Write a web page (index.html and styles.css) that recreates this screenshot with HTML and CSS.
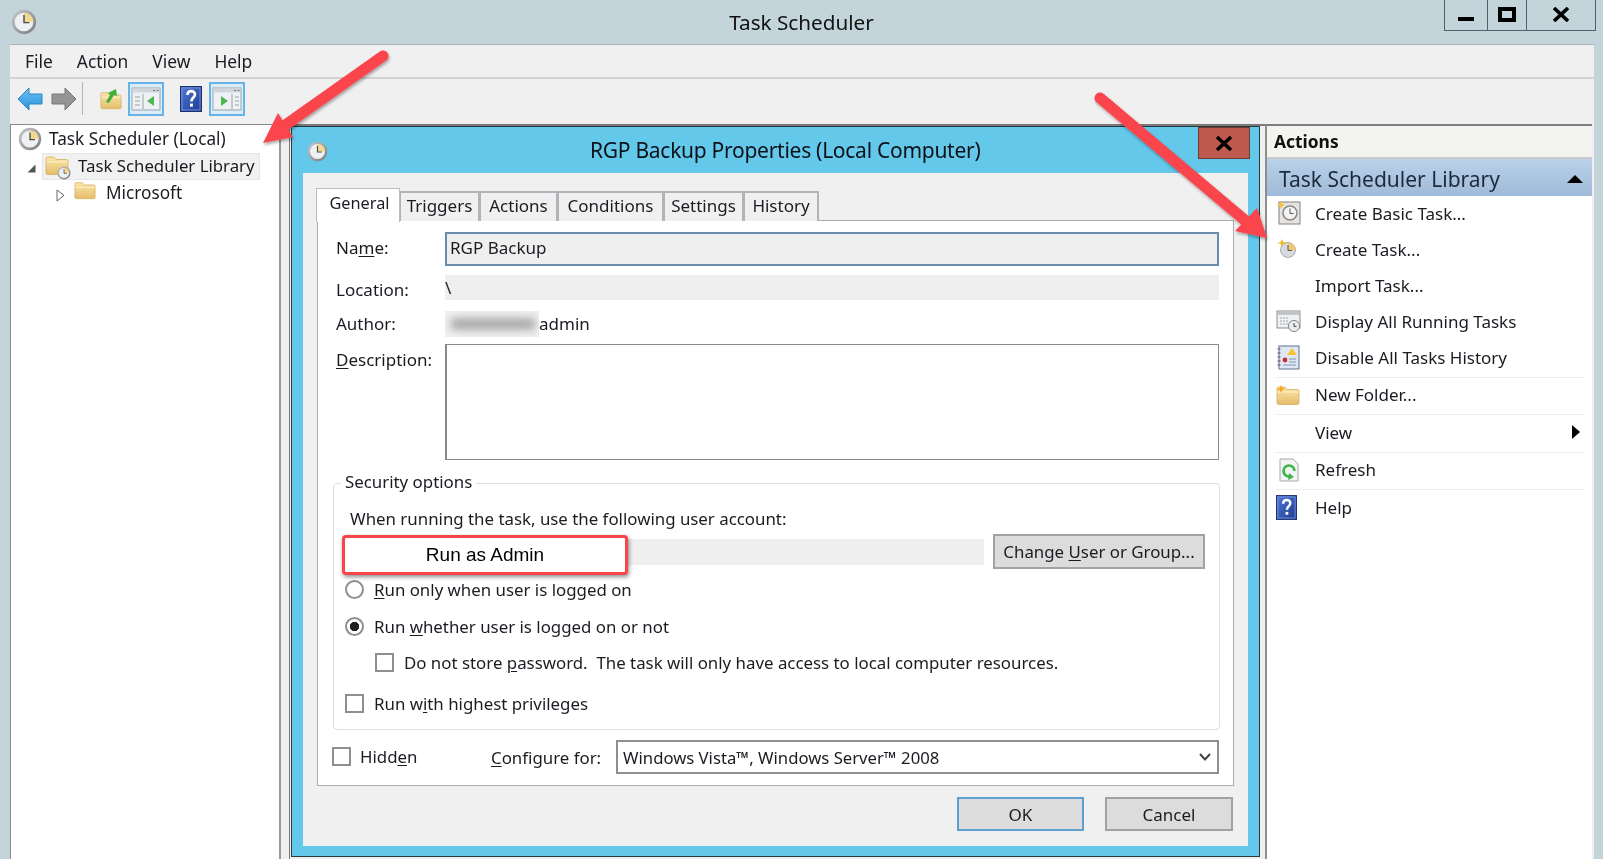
FILE: index.html
```html
<!DOCTYPE html>
<html lang="en">
<head>
<meta charset="utf-8">
<title>Task Scheduler</title>
<link rel="stylesheet" href="styles.css">
</head>
<body>
<svg class="defs" width="0" height="0">
  <defs>
    <linearGradient id="gRim" x1="0" y1="0" x2="1" y2="1"><stop offset="0" stop-color="#c9c9c9"/><stop offset="1" stop-color="#77797c"/></linearGradient>
    <linearGradient id="gFolder" x1="0" y1="0" x2="0" y2="1"><stop offset="0" stop-color="#fbe6a8"/><stop offset="1" stop-color="#e5bd6c"/></linearGradient>
    <linearGradient id="gHelp" x1="0" y1="0" x2="1" y2="1"><stop offset="0" stop-color="#4f79d6"/><stop offset="1" stop-color="#1e3a8f"/></linearGradient>
    <linearGradient id="gBack" x1="0" y1="0" x2="0" y2="1"><stop offset="0" stop-color="#6cc4f5"/><stop offset="1" stop-color="#2b8fd8"/></linearGradient>
    <symbol id="clock" viewBox="0 0 24 24">
      <circle cx="12" cy="12" r="11.2" fill="url(#gRim)"/>
      <circle cx="12" cy="12" r="8.6" fill="#eef0f3"/>
      <path d="M12 3.4A8.6 8.6 0 0 1 20.6 12H12Z" fill="#f2d98f"/>
      <path d="M12 5.5V12.6H17" fill="none" stroke="#4a4a4a" stroke-width="1.3"/>
    </symbol>
    <symbol id="folder" viewBox="0 0 24 20">
      <path d="M1 3.5A1.5 1.5 0 0 1 2.5 2H9L11 4.5H21.5A1.5 1.5 0 0 1 23 6V18A1.5 1.5 0 0 1 21.5 19.5H2.5A1.5 1.5 0 0 1 1 18Z" fill="url(#gFolder)" stroke="#d5ad62" stroke-width=".8"/>
      <path d="M1.5 7H22.5" stroke="#fff3cf" stroke-width="1"/>
    </symbol>
    <symbol id="help" viewBox="0 0 22 26">
      <rect x=".5" y=".5" width="21" height="25" fill="url(#gHelp)" stroke="#1d2f6f"/>
      <rect x="2" y="2" width="18" height="22" fill="none" stroke="#7f9ee6" stroke-width=".8"/>
      <path d="M7.5 9C7.5 3.8 15 4 15 8.6C15 11.6 11.4 11.6 11.4 15.4" fill="none" stroke="#fff" stroke-width="2.6"/>
      <rect x="10" y="17.6" width="2.9" height="3" fill="#fff"/>
    </symbol>
    <symbol id="pane" viewBox="0 0 30 28">
      <rect x="1" y="3" width="28" height="22" fill="#eef2f5" stroke="#9aa3a9"/>
      <rect x="1.5" y="3.5" width="27" height="4" fill="#d0d7dc"/>
      <path d="M22 5.5h2M25.5 5.5h2" stroke="#6d767c"/>
    </symbol>
  </defs>
</svg>

<header class="titlebar">
  <svg class="app-clock"><use href="#clock"/></svg>
  <div class="app-title">Task Scheduler</div>
  <div class="winbtns">
    <div class="winbtn w-min"><span class="i-min"></span></div>
    <div class="winbtn w-max"><span class="i-max"></span></div>
    <div class="winbtn w-close"><svg width="18" height="15" viewBox="0 0 18 15"><path d="M2 1L16 14M16 1L2 14" stroke="#000" stroke-width="3.6"/></svg></div>
  </div>
</header>

<main class="window">
  <nav class="menubar">
    <span>File</span><span>Action</span><span>View</span><span>Help</span>
  </nav>
  <div class="toolbar">
    <svg class="tb-arrow" viewBox="0 0 26 24"><path d="M1 12L12 1V7H25V17H12V23Z" fill="url(#gBack)" stroke="#2a86c9" stroke-linejoin="round"/></svg>
    <svg class="tb-arrow tb-fwd" viewBox="0 0 26 24"><path d="M25 12L14 1V7H1V17H14V23Z" fill="#949494" stroke="#777" stroke-linejoin="round"/></svg>
    <span class="tb-sep"></span>
    <svg class="tb-up" viewBox="0 0 22 23"><use href="#folder" y="3" width="22" height="20"/><path d="M6 15L10 8L8 6L16 2L17 9L14 8L9 16Z" fill="#3fae3d"/></svg>
    <span class="tb-toggle tb-t1"><svg width="30" height="28" viewBox="0 0 30 28"><use href="#pane" width="30" height="28"/><path d="M12 9V24M4 12h5M4 16h5M4 20h5" stroke="#9aa3a9" fill="none"/><path d="M23 11V21L16 16Z" fill="#4fb54f"/></svg></span>
    <svg class="tb-help"><use href="#help"/></svg>
    <span class="tb-toggle tb-t2"><svg width="30" height="28" viewBox="0 0 30 28"><use href="#pane" width="30" height="28"/><path d="M20 9V24M23 12h4M23 16h4M23 20h4" stroke="#9aa3a9" fill="none"/><path d="M9 11V21L16 16Z" fill="#4fb54f"/></svg></span>
  </div>

  <div class="panes">
    <aside class="tree">
      <div class="tree-row root">
        <svg class="ic-root"><use href="#clock"/></svg><span class="tt">Task Scheduler (Local)</span>
      </div>
      <div class="tree-row lib">
        <svg class="twisty open" viewBox="0 0 9 9"><path d="M8.5 .5V8.5H.5Z" fill="#555"/></svg>
        <div class="lib-label">
          <span class="ic-lib"><svg class="ic-lib-f"><use href="#folder"/></svg><svg class="ic-lib-c"><use href="#clock"/></svg></span>
          <span class="tt tt-lib">Task Scheduler Library</span>
        </div>
      </div>
      <div class="tree-row ms">
        <svg class="twisty" viewBox="0 0 9 13"><path d="M1 1L8 6.5L1 12Z" fill="#fff" stroke="#666"/></svg>
        <svg class="ic-ms"><use href="#folder"/></svg><span class="tt">Microsoft</span>
      </div>
    </aside>

    <section class="workspace"></section>

    <aside class="actions">
      <div class="actions-head">Actions</div>
      <div class="actions-sub"><span>Task Scheduler Library</span><svg width="16" height="8" viewBox="0 0 16 8"><path d="M8 0L16 8H0Z" fill="#000"/></svg></div>
      <div class="act"><span class="act-ic"><svg width="26" height="26" viewBox="0 0 26 26"><rect x="3" y="2" width="21" height="22" fill="#e6e4e2" stroke="#8a7f7a"/><circle cx="14" cy="13" r="7" fill="#f3f3f3" stroke="#8a8a8a" stroke-width="1.6"/><path d="M14 8.5V13.5H17.5" fill="none" stroke="#555"/><path d="M5 1L6.4 4L9.5 5L6.4 6L5 9L3.6 6L.5 5L3.6 4Z" fill="#f6c23b"/></svg></span><span>Create Basic Task...</span></div>
      <div class="act"><span class="act-ic"><svg width="26" height="26" viewBox="0 0 26 26"><circle cx="12" cy="14" r="7.5" fill="#d6dade" stroke="#a8adb1"/><path d="M12 6.5A7.5 7.5 0 0 1 19.5 14H12Z" fill="#f0c777"/><path d="M12 9V14.5H16" fill="none" stroke="#555"/><path d="M6 3L7.4 6L10.5 7L7.4 8L6 11L4.6 8L1.5 7L4.6 6Z" fill="#f6b72b"/></svg></span><span>Create Task...</span></div>
      <div class="act"><span class="act-ic"></span><span>Import Task...</span></div>
      <div class="act"><span class="act-ic"><svg width="26" height="26" viewBox="0 0 26 26"><rect x="1" y="3" width="23" height="17" fill="#f0f1f2" stroke="#8d8d8d"/><rect x="1.5" y="3.5" width="22" height="3.4" fill="#bfc3c7"/><path d="M4 10h9M4 13h9M4 16h9" stroke="#a4a8ac" stroke-dasharray="2 1"/><circle cx="18" cy="18" r="5.6" fill="#e8ecee" stroke="#7e8a90"/><path d="M18 15V18.4H20.5" fill="none" stroke="#445"/></svg></span><span>Display All Running Tasks</span></div>
      <div class="act act-sep"><span class="act-ic"><svg width="26" height="26" viewBox="0 0 26 26"><rect x="3" y="2" width="20" height="23" fill="#dfe7f3" stroke="#5e7390"/><path d="M1.5 5h3M1.5 9h3M1.5 13h3M1.5 17h3M1.5 21h3" stroke="#555"/><path d="M16 4L21 11H11Z" fill="#f5c531"/><circle cx="9" cy="16" r="2.4" fill="#c9302c"/><path d="M13 15h7M13 18h7M7 21h13" stroke="#8195b0"/></svg></span><span>Disable All Tasks History</span></div>
      <div class="act act-sep"><span class="act-ic"><svg width="24" height="22" viewBox="0 0 24 20"><use href="#folder" width="24" height="20"/><path d="M5 0L6.4 3L9.5 4L6.4 5L5 8L3.6 5L.5 4L3.6 3Z" fill="#f6a92b"/></svg></span><span>New Folder...</span></div>
      <div class="act act-sep"><span class="act-ic"></span><span class="act-grow">View</span><svg class="act-more" width="8" height="14" viewBox="0 0 8 14"><path d="M0 0L8 7L0 14Z" fill="#000"/></svg></div>
      <div class="act act-sep"><span class="act-ic"><svg width="26" height="26" viewBox="0 0 26 26"><path d="M4 2H17L22 7V24H4Z" fill="#f3f3f3" stroke="#a9a9a9"/><path d="M18.5 14A5.5 5.5 0 1 0 13 19.5" fill="none" stroke="#39b54a" stroke-width="2.6"/><path d="M13 16L18 20L12 23Z" fill="#39b54a"/></svg></span><span>Refresh</span></div>
      <div class="act act-last"><span class="act-ic"><svg width="21" height="25"><use href="#help"/></svg></span><span>Help</span></div>
    </aside>

    <article class="dialog">
      <div class="dlg-title">
        <svg class="dlg-clock"><use href="#clock"/></svg>
        <div class="dlg-text">RGP Backup Properties (Local Computer)</div>
        <div class="dlg-close"><svg width="18" height="15" viewBox="0 0 18 15"><path d="M2 1L16 14M16 1L2 14" stroke="#000" stroke-width="3.6"/></svg></div>
      </div>
      <div class="dlg-body">
        <div class="tabs">
          <div class="tab active">General</div>
          <div class="tab t-trig">Triggers</div>
          <div class="tab t-act">Actions</div>
          <div class="tab t-cond">Conditions</div>
          <div class="tab t-set">Settings</div>
          <div class="tab t-hist">History</div>
        </div>
        <div class="tabpanel">
          <div class="field f-name"><label>Na<u>m</u>e:</label><div class="val v-name">RGP Backup</div></div>
          <div class="field f-loc"><label>Location:</label><div class="val v-loc">\</div></div>
          <div class="field f-auth"><label>Author:</label><div class="val v-auth"><span class="blur"><i></i></span><span>admin</span></div></div>
          <div class="field f-desc"><label><u>D</u>escription:</label><div class="val v-desc"></div></div>

          <div class="group">
            <div class="legend">Security options</div>
            <div class="g-when">When running the task, use the following user account:</div>
            <div class="g-user">
              <div class="acct"></div>
              <div class="btn btn-change"><span>Change <u>U</u>ser or Group...</span></div>
            </div>
            <div class="opt o1"><span class="radio"></span><span><u>R</u>un only when user is logged on</span></div>
            <div class="opt o2"><span class="radio on"></span><span>Run <u>w</u>hether user is logged on or not</span></div>
            <div class="opt o3"><span class="check"></span><span>Do not store <u>p</u>assword.&nbsp; The task will only have access to local computer resources.</span></div>
            <div class="opt o4"><span class="check"></span><span>Run w<u>i</u>th highest privileges</span></div>
            <div class="callout">Run as Admin</div>
          </div>

          <div class="cfg-row">
            <div class="cfg-hidden"><span class="check"></span><span>Hidd<u>e</u>n</span></div>
            <div class="cfg-label"><u>C</u>onfigure for:</div>
            <div class="select"><span>Windows Vista™, Windows Server™ 2008</span><svg width="12" height="8" viewBox="0 0 12 8"><path d="M1 1L6 6.5L11 1" fill="none" stroke="#444" stroke-width="2"/></svg></div>
          </div>
        </div>
        <div class="dlg-btns">
          <div class="btn btn-ok">OK</div>
          <div class="btn btn-cancel">Cancel</div>
        </div>
      </div>
    </article>
  </div>
</main>

<svg class="arrows" width="1603" height="859" viewBox="0 0 1603 859">
  <defs><filter id="sh" x="-10%" y="-10%" width="120%" height="120%"><feDropShadow dx="1" dy="2" stdDeviation="1.5" flood-color="#000" flood-opacity=".35"/></filter></defs>
  <g filter="url(#sh)" fill="#f9444b" stroke="none">
    <path d="M383 56L284 126" stroke="#f9444b" stroke-width="11" stroke-linecap="round" fill="none"/>
    <path d="M263 143L278 113L293 137Z"/>
    <path d="M1100 98L1247 222" stroke="#f9444b" stroke-width="11" stroke-linecap="round" fill="none"/>
    <path d="M1267 238L1235 231L1257 208Z"/>
  </g>
</svg>
</body>
</html>
```

FILE: styles.css
```css
* { box-sizing: border-box; }
html, body { margin: 0; padding: 0; }
body {
  width: 1603px; height: 859px; overflow: hidden; position: relative;
  background: #c3d4db; color: #1b1b22;
  font-family: "Noto Sans", "Open Sans", sans-serif; font-size: 16px;
}
u { text-decoration-thickness: 1px; text-underline-offset: 2px; }
.defs { position: absolute; }

.titlebar { height: 44px; display: grid; grid-template-columns: 1fr auto 1fr; align-items: start; filter: blur(.3px); }
.app-clock { width: 26px; height: 26px; margin: 9px 0 0 11px; }
.app-title { font-size: 20.7px; line-height: 44px; color: #111; }
.winbtns { justify-self: end; display: flex; margin-right: 7px; height: 31px; border: 1px solid #55606a; border-top: 0; }
.winbtn { display: flex; align-items: flex-end; justify-content: center; border-left: 1px solid #55606a; padding-bottom: 8px; }
.winbtn:first-child { border-left: 0; }
.w-min { width: 42px; }
.w-max { width: 39px; }
.w-close { width: 69px; }
.w-close svg { margin-left: -1px; }
.i-min { width: 16px; height: 4px; background: #000; margin-bottom: 1px; }
.i-max { width: 18px; height: 15px; border: 4px solid #000; }

.window { margin: 0 9px 0 10px; height: 815px; background: #f0f0f0; border-top: 1px solid #a9b3b8; display: flex; flex-direction: column; filter: blur(.3px); }
.menubar { height: 34px; display: flex; align-items: center; gap: 24px; padding: 0 0 1px 15px; font-size: 17.4px; border-bottom: 2px solid #d2d2d2; flex: none; }
.toolbar { height: 45px; flex: none; display: flex; align-items: center; padding-bottom: 6px; }
.tb-arrow { width: 26px; height: 24px; margin-left: 7px; }
.tb-fwd { margin-left: 8px; }
.tb-sep { width: 1px; height: 33px; background: #b4b4b4; margin-left: 5px; }
.tb-up { width: 22px; height: 23px; margin-left: 17px; }
.tb-toggle { width: 36px; height: 34px; border: 2px solid #66b3e6; background: #dbecf8; display: flex; align-items: center; justify-content: center; }
.tb-toggle svg { flex: none; }
.tb-t1 { margin-left: 6px; }
.tb-help { width: 22px; height: 26px; margin-left: 16px; }
.tb-t2 { margin-left: 7px; }

.panes { flex: 1; min-height: 0; display: flex; position: relative; }
.tree { width: 271px; flex: none; background: #fff; border-left: 1px solid #8a8a8a; border-top: 1px solid #8a8a8a; border-right: 2px solid #9a9a9a; }
.tree-row { display: flex; align-items: center; font-size: 17.2px; }
.tt { margin-top: -2px; }
.tt-lib { font-size: 16.8px; }
.root { height: 28px; padding-left: 7px; }
.ic-root { width: 24px; height: 24px; margin-right: 7px; }
.lib { height: 27px; padding-left: 16px; }
.twisty.open { width: 9px; height: 9px; margin-right: 6px; margin-top: 3px; }
.lib-label { display: flex; align-items: center; width: 218px; height: 27px; background: #f1f1f1; border: 1px solid #e6e6e6; padding-left: 2px; }
.ic-lib { position: relative; width: 28px; height: 25px; margin-right: 5px; display: block; flex: none; }
.ic-lib-f { width: 24px; height: 22px; display: block; }
.ic-lib-c { position: absolute; width: 14px; height: 14px; right: 2px; bottom: -1px; }
.ms { height: 26px; padding-left: 45px; }
.ms .twisty { width: 9px; height: 13px; margin-right: 9px; margin-top: 4px; flex: none; }
.ic-ms { width: 22px; height: 20px; margin-right: 10px; margin-top: -6px; }

.workspace { flex: 1; border-top: 2px solid #7a7a7a; margin-left: 8px; border-left: 1px solid #777; background: #f0f0f0; }
.actions { width: 327px; flex: none; background: #fff; border-left: 2px solid #8e8e8e; border-top: 2px solid #7d7d7d; margin-right: 2px; }
.actions-head { height: 33px; display: flex; align-items: center; padding: 0 0 2px 7px; font-weight: 700; font-size: 17.4px; background: #f3f3f0; border-bottom: 2px solid #c9c9c9; color: #111; }
.actions-sub { height: 37px; display: flex; align-items: center; justify-content: space-between; padding: 2px 9px 0 12px; font-size: 21px; background: linear-gradient(#bad2ea, #9fbad8); color: #1d2a3a; }
.act { height: 36px; display: flex; align-items: center; font-size: 17px; margin: 0 8px 0 9px; padding-bottom: 2px; }
.act-ic { width: 39px; flex: none; display: flex; align-items: center; }
.act-sep { height: 37.5px; border-bottom: 1px solid #ececec; }
.act-last { height: 37.5px; }
.act-grow { flex: 1; }
.act-more { margin-right: 4px; }

.dialog { position: absolute; left: 281px; top: 2px; width: 969px; height: 731px; background: #64c8eb; border: 1px solid #2a3940; padding: 0 11px 10px; display: flex; flex-direction: column; z-index: 2; }
.dlg-title { height: 46px; display: flex; flex: none; align-items: flex-start; margin: 0 -11px; position: relative; }
.dlg-clock { width: 21px; height: 21px; margin: 14px 0 0 15px; flex: none; }
.dlg-text { font-size: 21px; letter-spacing: -.27px; color: #0d1117; line-height: 47px; margin-left: 262px; }
.dlg-close { position: absolute; right: 9px; top: 0; width: 52px; height: 32px; background: #bf5b4e; border: 1px solid #6e3c33; display: flex; align-items: center; justify-content: center; }
.dlg-body { flex: 1; background: #f0f0f0; padding: 14px 14px 0 13px; min-height: 0; }
.tabs { display: flex; align-items: flex-end; height: 34px; position: relative; z-index: 1; }
.tab { height: 30px; border: 2px solid #b0b4b8; border-bottom: 0; border-left-width: 1px; display: flex; align-items: center; justify-content: center; font-size: 17px; background: #f0f0f0; padding-bottom: 4px; }
.tab.active { width: 84px; height: 34px; background: #fff; border: 1px solid #b9bdc1; border-bottom: 0; margin-bottom: -1px; padding: 0 0 6px 3px; font-size: 16.3px; }
.t-trig { width: 80px; }
.t-act { width: 78px; }
.t-cond { width: 106px; }
.t-set { width: 80px; }
.t-hist { width: 75px; }
.tabpanel { margin-top: -1px; margin-left: 1px; width: 917px; height: 566px; background: #fff; border: 1px solid #a8acb0; padding: 11px 14px 0 18px; }
.field { display: flex; font-size: 17px; }
.field label { width: 109px; flex: none; }
.val { flex: 1; }
.f-name { height: 34px; align-items: center; }
.f-name label { padding-bottom: 4px; }
.v-name { height: 34px; background: #efefef; border: 2px solid #6b8cab; padding: 0 0 4px 3px; display: flex; align-items: center; }
.f-loc { height: 25px; margin-top: 9px; align-items: center; }
.f-loc label { padding-top: 4px; }
.v-loc { height: 25px; background: #efefef; line-height: 26px; }
.f-auth { height: 26px; margin-top: 11px; align-items: center; }
.f-auth label { padding-bottom: 2px; }
.v-auth { display: flex; align-items: center; }
.v-auth span:last-child { margin-top: -2px; }
.blur { width: 94px; height: 26px; background: #f1f1f1; overflow: hidden; display: block; flex: none; }
.blur i { display: block; width: 84px; height: 12px; margin: 7px 0 0 6px; background: #a9a9ab; filter: blur(4px); }
.f-desc { height: 116px; margin-top: 7px; }
.f-desc label { padding-top: 4px; }
.v-desc { border: 2px solid #8a8a8a; border-width: 1px 1px 1px 2px; background: #fff; }

.group { position: relative; margin: 23px 0 0 -3px; width: 887px; height: 247px; border: 1px solid #d7e0e6; border-radius: 4px; font-size: 16.85px; }
.legend { width: fit-content; height: 22px; line-height: 20px; margin: -12px 0 0 7px; padding: 0 4px; background: #fff; }
.g-when { height: 22px; line-height: 22px; margin: 14px 0 0 16px; }
.g-user { display: flex; align-items: center; height: 35px; margin: 4px 14px 0 16px; gap: 9px; }
.acct { flex: 1; height: 26px; background: #efefef; }
.btn { display: flex; align-items: center; justify-content: center; background: #dcdcdc; border: 2px solid #a2a2a2; font-size: 17px; }
.btn-change { width: 212px; height: 35px; flex: none; font-size: 16.85px; }
.opt { display: flex; align-items: center; height: 22px; margin-left: 11px; gap: 10px; }
.o1 { margin-top: 9px; }
.o2 { margin-top: 15px; }
.o3 { margin-top: 14px; margin-left: 41px; }
.o4 { margin-top: 19px; }
.radio, .check { width: 19px; height: 19px; flex: none; border: 2px solid #8f8f8f; background: #fff; display: block; }
.radio { border-radius: 50%; }
.radio.on { background: radial-gradient(circle, #222 0 4.4px, #fff 5px); }
.callout { position: absolute; left: 8px; top: 51px; width: 286px; height: 40px; background: #fff; border: 3px solid #f9444b; border-radius: 4px; box-shadow: 1px 2px 4px rgba(0,0,0,.45); display: flex; align-items: center; justify-content: center; font-family: "Liberation Sans", Arial, sans-serif; font-size: 19px; color: #000; }
.cfg-row { display: flex; align-items: center; margin: 10px 0 0 -4px; height: 34px; font-size: 16.85px; }
.cfg-hidden { width: 159px; flex: none; display: flex; align-items: center; gap: 9px; margin-top: -2px; }
.cfg-label { width: 125px; flex: none; }
.select { flex: 1; height: 34px; border: 2px solid #8f8f8f; background: #fff; display: flex; align-items: center; justify-content: space-between; padding: 0 6px 0 5px; font-size: 16.7px; }
.dlg-btns { display: flex; justify-content: flex-end; gap: 21px; margin-top: 11px; padding-right: 1px; }
.btn-ok { width: 127px; height: 34px; border-color: #5f9fd0; }
.btn-cancel { width: 128px; height: 34px; }

.arrows { position: absolute; left: 0; top: 0; pointer-events: none; z-index: 5; }
```
